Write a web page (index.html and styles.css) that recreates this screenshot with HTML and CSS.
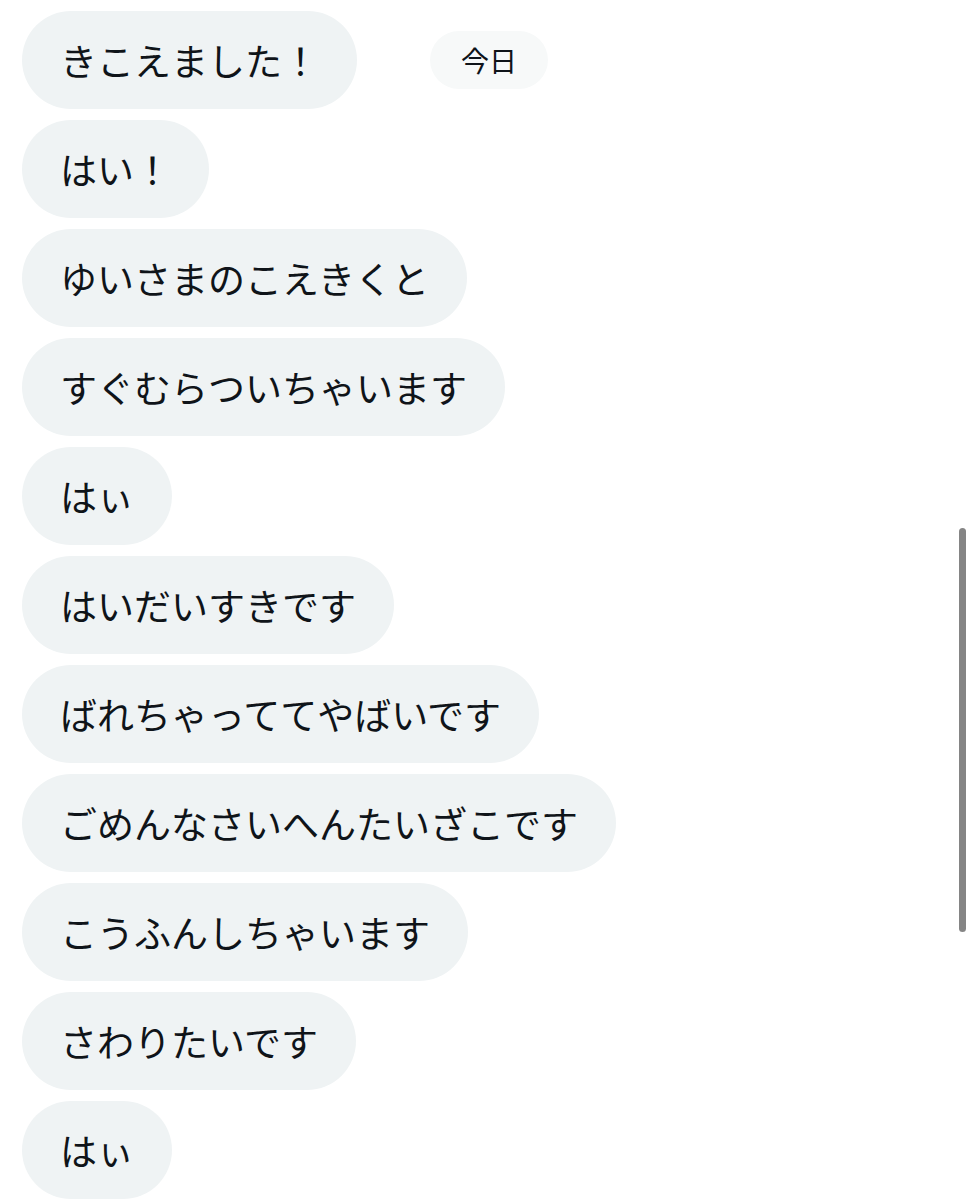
FILE: index.html
```html
<!DOCTYPE html>
<html lang="ja">
<head>
    <meta charset="UTF-8">
    <meta name="viewport" content="width=device-width, initial-scale=1.0">
    <title>メッセージ</title>
    <link rel="stylesheet" href="styles.css">
</head>
<body>
    <div class="chat">
        <div class="row"><div class="bubble cut"></div></div>
        <div class="row">
            <div class="bubble">きこえました！</div>
            <div class="day">今日</div>
        </div>
        <div class="row"><div class="bubble">はい！</div></div>
        <div class="row"><div class="bubble">ゆいさまのこえきくと</div></div>
        <div class="row"><div class="bubble">すぐむらついちゃいます</div></div>
        <div class="row"><div class="bubble">はぃ</div></div>
        <div class="row"><div class="bubble">はいだいすきです</div></div>
        <div class="row"><div class="bubble">ばれちゃっててやばいです</div></div>
        <div class="row"><div class="bubble">ごめんなさいへんたいざこです</div></div>
        <div class="row"><div class="bubble">こうふんしちゃいます</div></div>
        <div class="row"><div class="bubble">さわりたいです</div></div>
        <div class="row"><div class="bubble">はぃ</div></div>
    </div>
    <div class="scrollbar"></div>
</body>
</html>
```

FILE: styles.css
```css
body {
    margin: 0;
    background: #ffffff;
    color: #0f1419;
    font-family: "Noto Sans CJK JP", "Noto Sans", sans-serif;
    overflow: hidden;
}
.chat {
    display: flex;
    flex-direction: column;
    gap: 11px;
    margin-top: -97px;
    padding-left: 22px;
}
.row {
    display: flex;
    align-items: center;
}
.bubble {
    background: #eff3f4;
    border-radius: 49px;
    padding: 24px 38px;
    font-size: 37px;
    line-height: 50px;
    white-space: nowrap;
}
.cut {
    width: 214px;
    height: 49px;
}
.day {
    margin-left: 73px;
    background: #f7f9f9;
    border-radius: 29px;
    padding: 0 31px;
    height: 58px;
    line-height: 58px;
    font-size: 28px;
}
.scrollbar {
    position: fixed;
    right: 8px;
    top: 528px;
    width: 7px;
    height: 404px;
    border-radius: 4px;
    background: #858585;
}
```
